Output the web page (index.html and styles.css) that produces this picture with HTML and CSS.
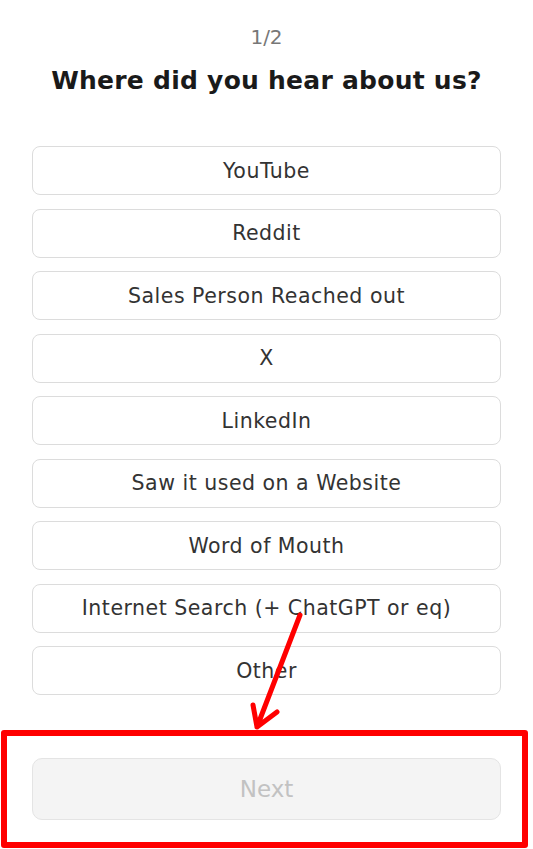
FILE: index.html
```html
<!DOCTYPE html>
<html lang="en">
<head>
    <meta charset="UTF-8">
    <meta name="viewport" content="width=device-width,user-scalable=no">
    <title>Where did you hear about us?</title>
    <link rel="stylesheet" href="styles.css">
</head>
<body>
    <section class="survey">
        <p class="step">1/2</p>
        <h1 class="title">Where did you hear about us?</h1>
        <div class="options">
            <button class="option">YouTube</button>
            <button class="option">Reddit</button>
            <button class="option">Sales Person Reached out</button>
            <button class="option">X</button>
            <button class="option">LinkedIn</button>
            <button class="option">Saw it used on a Website</button>
            <button class="option">Word of Mouth</button>
            <button class="option">Internet Search (+ ChatGPT or eq)</button>
            <button class="option">Other</button>
        </div>
        <button class="next" disabled>Next</button>
    </section>
    <!-- annotation drawn over the screenshot -->
    <div class="mark-box"></div>
    <svg class="mark-arrow" width="533" height="849" viewBox="0 0 533 849">
        <path d="M300 615 L257 727 M253 705 L257 727 L277 712" fill="none" stroke="#ff0000" stroke-width="5" stroke-linecap="round" stroke-linejoin="round"/>
    </svg>
</body>
</html>
```

FILE: styles.css
```css
html,body{ height:100%; }
body{ margin:0; background:#fff; font-family:"DejaVu Sans","Open Sans",sans-serif; position:relative; }
.survey{
    width:469px;
    margin:0 auto;
    padding-top:25px;
    text-align:center;
}
.step{
    margin:0;
    font-size:20px;
    line-height:24px;
    color:#777;
}
.title{
    margin:16px 0 0;
    font-size:25px;
    line-height:32px;
    font-weight:700;
    letter-spacing:0.25px;
    color:#1a1a1a;
}
.options{
    margin-top:49px;
    display:flex;
    flex-direction:column;
    gap:13.5px;
}
.option{
    height:49px;
    box-sizing:border-box;
    border:1.5px solid #dcdcdc;
    border-radius:8px;
    background:#fff;
    font-family:inherit;
    font-size:20.5px;
    letter-spacing:0.5px;
    color:#333;
    padding:0;
}
.next{
    margin-top:63px;
    width:100%;
    height:62px;
    box-sizing:border-box;
    border:1.5px solid #e4e4e4;
    border-radius:10px;
    background:#f4f4f4;
    font-family:inherit;
    font-size:23px;
    color:#c2c2c2;
}
.mark-box{
    position:absolute;
    left:1px;
    top:730px;
    width:527px;
    height:118px;
    box-sizing:border-box;
    border:6.5px solid #ff0000;
    border-radius:3px;
}
.mark-arrow{
    position:absolute;
    left:0;
    top:0;
    pointer-events:none;
}
```
